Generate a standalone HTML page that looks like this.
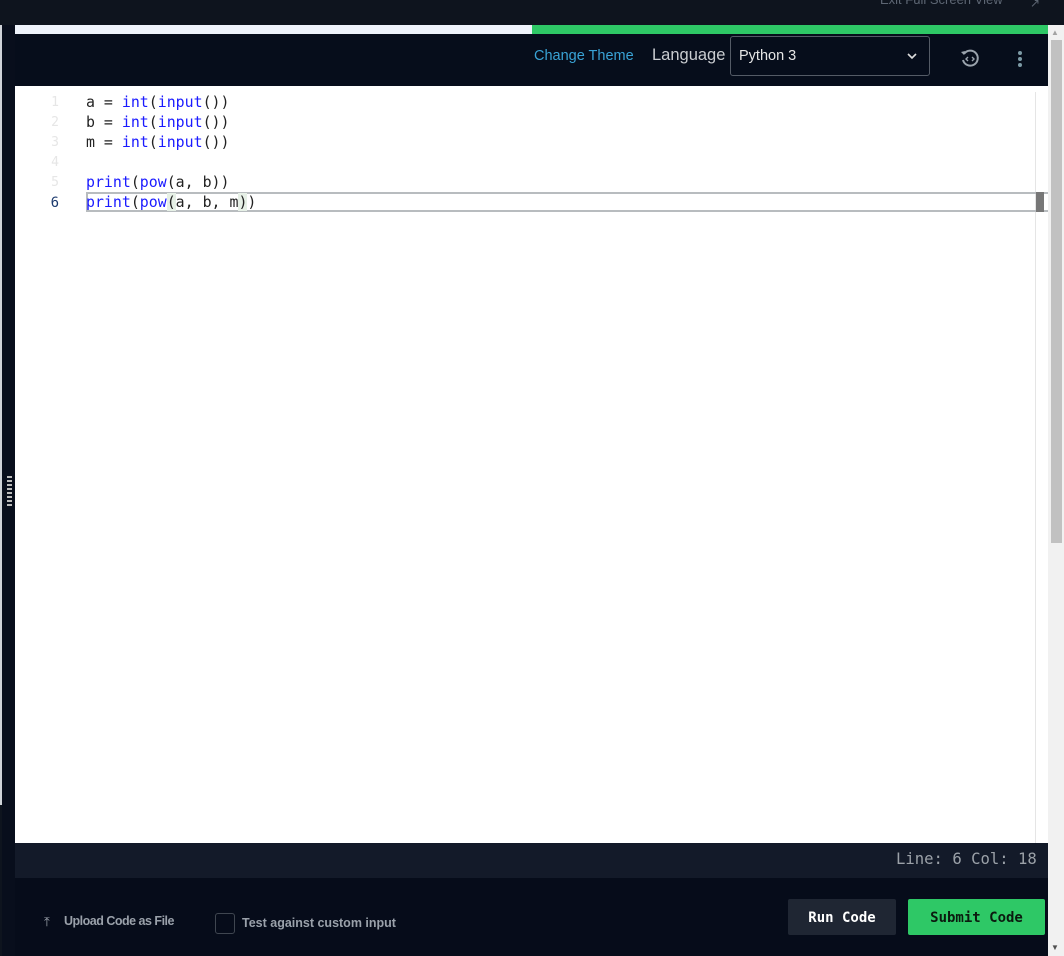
<!DOCTYPE html>
<html><head><style>
*{margin:0;padding:0;box-sizing:border-box}
body{width:1064px;height:956px;overflow:hidden;background:#0e141e;position:relative;font-family:"Liberation Sans",sans-serif}
.abs{position:absolute}
.code{font-family:"DejaVu Sans Mono","Liberation Mono",monospace;font-size:14.9px;line-height:20px;color:#222}
.kw{color:#1a1aff}
.ln{color:#e6e6e6;text-align:right;width:44px;left:15px;font-family:"DejaVu Sans Mono",monospace;font-size:13px;line-height:20px}
</style></head><body>
<div class="abs" style="left:0;top:0;width:1064px;height:25px;background:#0e141e"></div>
<div class="abs" style="left:880px;top:-8px;color:#5d6673;font-size:13px">Exit Full Screen View</div>
<div class="abs" style="left:1030px;top:-4px;color:#5d6673;font-size:12px">↗</div>
<div class="abs" style="left:0;top:25px;width:2px;height:780px;background:#cfd3d8"></div>
<div class="abs" style="left:2px;top:25px;width:13px;height:931px;background:#080e1c"></div>
<div class="abs" style="left:7px;top:476px;width:5px;height:30px;background:repeating-linear-gradient(#bbb 0 2px,transparent 2px 4px)"></div>
<div class="abs" style="left:15px;top:25px;width:517px;height:9px;background:#eef3fb"></div>
<div class="abs" style="left:532px;top:25px;width:516px;height:9px;background:#2ec866"></div>
<div class="abs" style="left:15px;top:34px;width:1033px;height:52px;background:#060d1b"></div>
<div class="abs" style="left:534px;top:48px;color:#39a3d6;font-size:14.5px">Change Theme</div>
<div class="abs" style="left:652px;top:46px;color:#c9ccd0;font-size:16.5px">Language</div>
<div class="abs" style="left:730px;top:36px;width:200px;height:40px;border:1px solid #545b66;border-radius:3px;background:#060d1b"></div>
<div class="abs" style="left:739px;top:48px;color:#e6e6e6;font-size:14.5px">Python 3</div>
<svg class="abs" style="left:907px;top:52px" width="10" height="8"><path d="M1 2l4 4 4-4" stroke="#ddd" stroke-width="1.6" fill="none"/></svg>
<svg class="abs" style="left:958px;top:48px" width="24" height="22" viewBox="0 0 24 22"><path d="M6 6a7.5 7.5 0 1 1-1 6" stroke="#9aa3ad" stroke-width="2" fill="none"/><path d="M3 4l3 3 1-4z" fill="#9aa3ad"/><path d="M10 9l-2 2 2 2M14 9l2 2-2 2" stroke="#9aa3ad" stroke-width="1.4" fill="none"/></svg>
<div class="abs" style="left:1018px;top:51px;width:4px;height:4px;border-radius:2px;background:#7c9aa6;box-shadow:0 6px 0 #7c9aa6,0 12px 0 #7c9aa6"></div>
<div class="abs" style="left:15px;top:86px;width:1033px;height:757px;background:#fff"></div>
<div class="abs" style="left:1035px;top:92px;width:1px;height:751px;background:#e5e5e5"></div>
<div class="abs" style="left:86px;top:192px;width:962px;height:20px;border:2px solid #b8bcbf;border-right:none"></div>
<div class="abs" style="left:1036px;top:192px;width:8px;height:20px;background:#777"></div>
<div class="abs ln" style="top:93px">1<br>2<br>3<br>4<br>5<br><span style="color:#1c3a6e;font-size:14px">6</span></div>
<div class="abs code" style="left:86px;top:92px;white-space:pre">a = <span class="kw">int</span>(<span class="kw">input</span>())
b = <span class="kw">int</span>(<span class="kw">input</span>())
m = <span class="kw">int</span>(<span class="kw">input</span>())

<span class="kw">print</span>(<span class="kw">pow</span>(a, b))
<span class="kw">print</span>(<span class="kw">pow</span><span style="background:#e6f0e6">(</span>a, b, m<span style="background:#e6f0e6">)</span>)</div>
<div class="abs" style="left:1048px;top:25px;width:16px;height:931px;background:#f1f1f1"></div>
<div class="abs" style="left:1051px;top:40px;width:11px;height:503px;background:#c1c1c1"></div>
<div class="abs" style="left:1051px;top:28px;color:#a3a3a3;font-size:8px">▲</div>
<div class="abs" style="left:1051px;top:943px;color:#505050;font-size:8px">▼</div>
<div class="abs" style="left:15px;top:843px;width:1033px;height:35px;background:#131a29"></div>
<div class="abs" style="left:896px;top:850px;color:#9ba1a8;font-family:'DejaVu Sans Mono',monospace;font-size:15.6px">Line: 6 Col: 18</div>
<div class="abs" style="left:15px;top:878px;width:1033px;height:78px;background:#060c1a"></div>
<div class="abs" style="left:44px;top:914px;color:#9aa1aa;font-size:13px">⤒</div>
<div class="abs" style="left:64px;top:914px;color:#9aa1aa;font-size:12.5px;font-weight:bold;letter-spacing:-0.5px">Upload Code as File</div>
<div class="abs" style="left:215px;top:913px;width:20px;height:21px;border:1px solid #3f4650;border-radius:3px"></div>
<div class="abs" style="left:242px;top:916px;color:#9aa1aa;font-size:12.5px;font-weight:bold">Test against custom input</div>
<div class="abs" style="left:788px;top:899px;width:108px;height:36px;background:#1f2633;border-radius:2px;color:#fff;font-family:'DejaVu Sans Mono',monospace;font-weight:bold;font-size:14px;text-align:center;line-height:38px">Run Code</div>
<div class="abs" style="left:908px;top:899px;width:137px;height:36px;background:#2ec866;border-radius:2px;color:#0b1a0f;font-family:'DejaVu Sans Mono',monospace;font-weight:bold;font-size:14px;text-align:center;line-height:38px">Submit Code</div>
</body></html>
